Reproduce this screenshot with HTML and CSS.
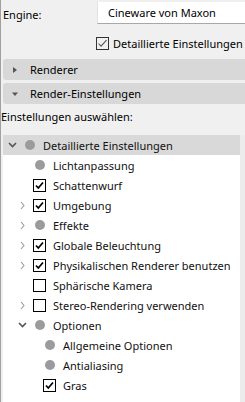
FILE: index.html
```html
<!DOCTYPE html>
<html lang="de">

<head>
    <meta charset="UTF-8">
    <meta name="viewport" content="width=device-width, initial-scale=1.0">
    <title>Render-Einstellungen</title>
    <link rel="stylesheet" href="styles.css">
</head>

<body>
    <div class="panel">

        <div class="engine-row">
            <label class="engine-label">Engine:</label>
            <div class="engine-select">Cineware von Maxon</div>
        </div>

        <div class="detail-row">
            <span class="win-check">
                <svg width="13" height="13" viewBox="0 0 13 13"><path d="M2.5 6.5 L5 9.2 L10.5 3.2" fill="none" stroke="#555" stroke-width="1.1"/></svg>
            </span>
            <span>Detaillierte Einstellungen</span>
        </div>

        <!-- Gruppen -->
        <div class="group-head first">
            <svg class="tri" width="8" height="8" viewBox="0 0 8 8"><path d="M2 1 L6 4 L2 7 Z" fill="#555"/></svg>
            <span>Renderer</span>
        </div>
        <div class="group-head">
            <svg class="tri" width="8" height="8" viewBox="0 0 8 8"><path d="M1 2.5 L7 2.5 L4 6 Z" fill="#555"/></svg>
            <span>Render-Einstellungen</span>
        </div>

        <div class="choose-label">Einstellungen auswählen:</div>

        <div class="tree-wrap">
            <div class="tree" id="tree"></div>
            <div class="scroll-strip"></div>
        </div>

    </div>

    <script>
        // Einträge: [Ebene, Pfeil, Symbol, Text, markiert]
        const items = [
            [0, 'open', 'dot', 'Detaillierte Einstellungen', true],
            [1, '', 'dot', 'Lichtanpassung'],
            [1, '', 'on', 'Schattenwurf'],
            [1, 'closed', 'on', 'Umgebung'],
            [1, 'closed', 'dot', 'Effekte'],
            [1, 'closed', 'on', 'Globale Beleuchtung'],
            [1, 'closed', 'on', 'Physikalischen Renderer benutzen'],
            [1, '', 'off', 'Sphärische Kamera'],
            [1, 'closed', 'off', 'Stereo-Rendering verwenden'],
            [1, 'open', 'dot', 'Optionen'],
            [2, '', 'dot', 'Allgemeine Optionen'],
            [2, '', 'dot', 'Antialiasing'],
            [2, '', 'on', 'Gras']
        ];

        const arrows = {
            open: '<svg width="9" height="6" viewBox="0 0 9 6"><path d="M1 1 L4.5 4.5 L8 1" fill="none" stroke="#555" stroke-width="1.6"/></svg>',
            closed: '<svg width="5" height="9" viewBox="0 0 5 9"><path d="M1 1 L4 4.5 L1 8" fill="none" stroke="#9a9a9a" stroke-width="1.1"/></svg>'
        };

        const icons = {
            dot: '<span class="dot"></span>',
            on: '<span class="box"><svg width="11" height="11" viewBox="0 0 11 11"><path d="M2 5.5 L4.3 8 L9 2.5" fill="none" stroke="#000" stroke-width="1.7"/></svg></span>',
            off: '<span class="box"></span>'
        };

        const tree = document.getElementById('tree');
        items.forEach(function (it) {
            const row = document.createElement('div');
            row.className = 'tree-row lvl-' + it[0] + (it[4] ? ' selected' : '');
            row.innerHTML =
                '<span class="exp">' + (arrows[it[1]] || '') + '</span>' +
                '<span class="ico">' + icons[it[2]] + '</span>' +
                '<span class="txt">' + it[3] + '</span>';
            tree.appendChild(row);
        });
    </script>
</body>

</html>
```

FILE: styles.css
```css
html,
body {
    margin: 0;
    padding: 0;
    background-color: #f0f0f0;
    font-family: 'Noto Sans', sans-serif;
    font-size: 11px;
    color: #000;
    overflow: hidden;
}

.panel {
    height: 402px;
    border-left: 1px solid #a0a0a0;
    white-space: nowrap;
}

.engine-row {
    display: flex;
    align-items: center;
    height: 23px;
    padding-top: 1px;
}

.engine-label {
    width: 94px;
    padding-left: 2px;
    padding-top: 3px;
}

.engine-select {
    flex: 1;
    height: 21px;
    line-height: 21px;
    padding-left: 10px;
    background-color: #fff;
    border-left: 1px solid #e2e2e2;
    border-bottom: 1px solid #a8a8a8;
}

.detail-row {
    display: flex;
    align-items: center;
    margin-top: 13px;
    padding-left: 95px;
    height: 13px;
}

.win-check {
    display: inline-block;
    flex: none;
    width: 11px;
    height: 11px;
    border: 1px solid #333;
    margin-right: 4px;
    position: relative;
}

.win-check svg {
    position: absolute;
    left: -1px;
    top: -1px;
}

.group-head {
    display: flex;
    align-items: center;
    margin-left: 2px;
    height: 21px;
    background-color: #d8d8d8;
    border-radius: 3px 0 0 3px;
    margin-bottom: 3px;
}

.group-head.first {
    margin-top: 9px;
}

.tri {
    margin-left: 8px;
    margin-right: 11px;
}

.choose-label {
    margin-top: 3px;
    height: 28px;
    line-height: 20px;
}

.tree-wrap {
    display: flex;
    margin-left: 2px;
    height: 270px;
}

.tree {
    width: 237px;
    background-color: #fff;
}

.scroll-strip {
    flex: 1;
    background-color: #ececec;
}

.tree-row {
    display: flex;
    align-items: center;
    height: 20px;
    color: #111;
}

.tree-row.selected {
    background-color: #d9d9d9;
}

.lvl-0 {
    padding-left: 4px;
}

.lvl-1 {
    padding-left: 14px;
}

.lvl-2 {
    padding-left: 24px;
}

.exp {
    width: 11px;
    display: flex;
    justify-content: center;
    align-items: center;
}

.ico {
    width: 15px;
    margin-left: 4px;
    display: flex;
    justify-content: center;
    align-items: center;
}

.txt {
    margin-left: 6px;
}

.dot {
    width: 10px;
    height: 10px;
    border-radius: 50%;
    background-color: #9b9b9d;
}

.box {
    width: 11px;
    height: 11px;
    border: 1px solid #000;
    background-color: #fff;
    display: flex;
}
```
